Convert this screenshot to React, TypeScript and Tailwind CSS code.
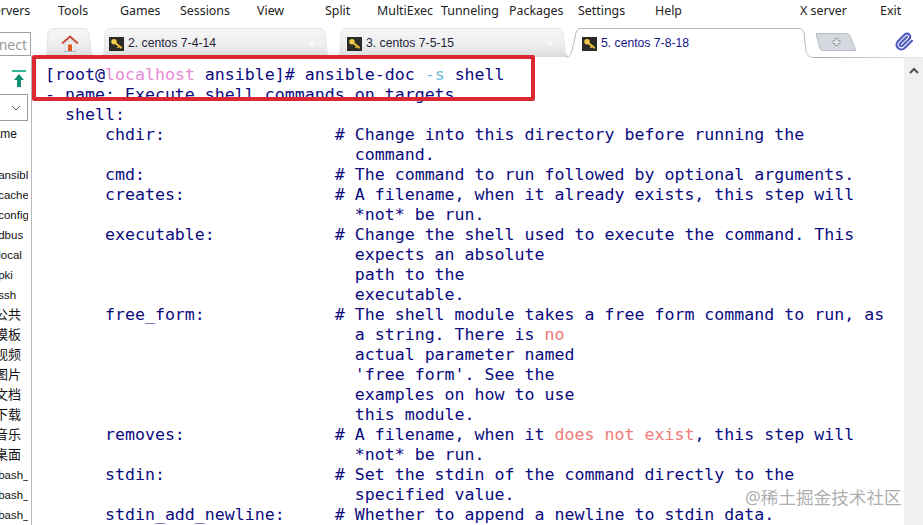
const menu: [string, string][] = [
  ["Servers", "w-[71px]"],
  ["Tools", "w-[62px]"],
  ["Games", "w-[60px]"],
  ["Sessions", "w-[77px]"],
  ["View", "w-[68px]"],
  ["Split", "w-[52px]"],
  ["MultiExec", "w-[64px]"],
  ["Tunneling", "w-[68px]"],
  ["Packages", "w-[69px]"],
  ["Settings", "w-[77px]"],
  ["Help", "w-[145px]"],
  ["X server", "w-[80px]"],
  ["Exit", "w-[30px]"],
];

type Seg = string | { t: string; c: string };
const N = "text-[#0b0b7e]";
const lines: Seg[][] = [
  ["[root@", { t: "localhost", c: "text-[#e88ad6]" }, " ansible]# ansible-doc ", { t: "-s", c: "text-[#6cc0dc]" }, " shell"],
  ["- name: Execute shell commands on targets"],
  ["  shell:"],
  ["      chdir:                 # Change into this directory before running the"],
  ["                               command."],
  ["      cmd:                   # The command to run followed by optional arguments."],
  ["      creates:               # A filename, when it already exists, this step will"],
  ["                               *not* be run."],
  ["      executable:            # Change the shell used to execute the command. This"],
  ["                               expects an absolute"],
  ["                               path to the"],
  ["                               executable."],
  ["      free_form:             # The shell module takes a free form command to run, as"],
  ["                               a string. There is ", { t: "no", c: "text-[#f07a78]" }],
  ["                               actual parameter named"],
  ["                               'free form'. See the"],
  ["                               examples on how to use"],
  ["                               this module."],
  ["      removes:               # A filename, when it ", { t: "does not exist", c: "text-[#f07a78]" }, ", this step will"],
  ["                               *not* be run."],
  ["      stdin:                 # Set the stdin of the command directly to the"],
  ["                               specified value."],
  ["      stdin_add_newline:     # Whether to append a newline to stdin data."],
];

const files: [string, boolean][] = [
  [".ansible", false],
  [".cache", false],
  [".config", false],
  [".dbus", false],
  [".local", false],
  [".pki", false],
  [".ssh", false],
  ["公共", true],
  ["模板", true],
  ["视频", true],
  ["图片", true],
  ["文档", true],
  ["下载", true],
  ["音乐", true],
  ["桌面", true],
  [".bash_history", false],
  [".bash_logout", false],
  [".bash_profile", false],
];

function KeyIcon() {
  return (
    <svg width="15" height="14" viewBox="0 0 15 14" className="shrink-0">
      <rect width="15" height="14" fill="#2b2b28" />
      <path d="M5 5 L12 10.500" stroke="#eabd3c" strokeWidth="2.200" strokeLinecap="round" />
      <circle cx="5" cy="4.800" r="2.700" fill="#f3cb4a" />
      <path d="M10 9 L8.500 11" stroke="#eabd3c" strokeWidth="1.400" />
    </svg>
  );
}

function TabShape({ width, active, id }: { width: number; active?: boolean; id: string }) {
  const h = 29;
  const d = `M0.5 ${h} C4 ${h} 6 ${h - 2} 7 ${h - 6} L${active ? 11 : 8} 5 C${active ? 12 : 9} 1.500 ${active ? 13 : 11} 0.500 ${active ? 16 : 14} 0.500 L${width - 14} 0.500 C${width - 11} 0.500 ${width - 9} 1.500 ${width - 8} 5 L${width - 6} ${h - 6} C${width - 5} ${h - 2} ${width - 3} ${h} ${width - 0.5} ${h}`;
  return (
    <svg width={width} height={h + 1} className="absolute left-0 top-[2px]">
      <defs>
        <linearGradient id={id} x1="0" y1="0" x2="0" y2="1">
          <stop offset="0" stopColor="#f6f6f6" />
          <stop offset="0.55" stopColor="#efefef" />
          <stop offset="1" stopColor="#dcdcdc" />
        </linearGradient>
      </defs>
      <path d={d} fill={active ? "#ffffff" : `url(#${id})`} stroke={active ? "#b4bcc0" : "#e4e4e4"} strokeWidth="1" />
    </svg>
  );
}

function Tab({ label, width, active, cls, pad, id }: { label: string; width: number; active?: boolean; cls: string; pad: string; id: string }) {
  return (
    <div className={`relative h-[30px] shrink-0 ${cls}`} style={{ width }}>
      <TabShape width={width} active={active} id={id} />
      <div className={`relative flex h-full items-center gap-[4px] pt-[5px] font-['Liberation_Sans',sans-serif] text-[12.2px] ${pad} ${active ? "text-[#14148a]" : "text-[#23233c]"}`}>
        <KeyIcon />
        <span>{label}</span>
      </div>
      {!active && <span className="absolute right-[18px] top-[9px] font-['Liberation_Sans',sans-serif] text-[11px] text-white">×</span>}
    </div>
  );
}

export default function App() {
  return (
    <div className="relative h-[525px] w-[923px] overflow-hidden bg-white font-['Noto_Sans',sans-serif] text-black">
      {/* menu */}
      <div className="-ml-[13px] flex h-[26px] items-start whitespace-nowrap pt-[1px] text-[12.4px] leading-[19px] text-[#222]">
        {menu.map(([m, w]) => (
          <span key={m} className={`shrink-0 ${w}`}>
            {m}
          </span>
        ))}
      </div>

      {/* tabs row */}
      <div className="flex h-[30px] items-start">
        <div className="mt-[6px] flex h-[24px] w-[31px] shrink-0 items-center justify-end overflow-hidden border border-l-0 border-[#a0a0a0] pr-[3px] text-[14px] text-[#9a9a9a]">
          <span>Connect</span>
        </div>
        <div className="relative ml-[9px] h-[30px] w-[57px] shrink-0">
          <TabShape width={57} id="home" />
          <svg width="18" height="17" viewBox="0 0 18 17" className="absolute left-[21px] top-[9px]">
            <path d="M1 8.500 L9 1.500 L17 8.500" fill="none" stroke="#c9483a" strokeWidth="1.800" />
            <path d="M4 8 L9 4 L14 8 V16 H4 Z" fill="#ececec" stroke="#c4c4c4" strokeWidth="0.500" />
            <rect x="7" y="9.500" width="4" height="6.500" fill="#e2571e" />
            <path d="M3 16.500 H15" stroke="#a8c0d0" strokeWidth="1" />
          </svg>
        </div>
        <Tab label="2. centos 7-4-14" width={236} cls="" pad="pl-[12px]" id="t2" />
        <Tab label="3. centos 7-5-15" width={238} cls="" pad="pl-[14px]" id="t3" />
        <Tab label="5. centos 7-8-18" width={247} cls="-ml-[6px] z-10" pad="pl-[17px]" active id="t5" />
        <svg width="42" height="18" viewBox="0 0 42 18" className="ml-[3px] mt-[7px] shrink-0">
          <path d="M1 0.500 H32 Q34 0.500 35 3 L41 17.500 H8 Q5.500 17.500 4.500 15 Z" fill="#d3d9de" stroke="#b8bfc4" />
          <path d="M20 5.500 H23 V7.500 H25 V10.500 H23 V12.500 H20 V10.500 H18 V7.500 H20 Z" fill="#e8ebee" stroke="#9aa3a8" />
        </svg>
        <svg width="19" height="19" viewBox="0 0 24 24" className="ml-[38px] mt-[6px] shrink-0" fill="none" stroke="#4f5cc0" strokeWidth="2.800" strokeLinecap="round" strokeLinejoin="round">
          <path d="m21.440 11.050-9.190 9.190a6 6 0 0 1-8.490-8.490l8.570-8.570A4 4 0 1 1 18 8.840l-8.590 8.570a2 2 0 0 1-2.830-2.830l8.490-8.480" />
        </svg>
      </div>

      {/* body */}
      <div className="flex h-[469px]">
        {/* sidebar */}
        <div className="flex w-[32px] shrink-0 flex-col border-r border-[#b8b8b8]">
          <svg width="16" height="18" viewBox="0 0 16 18" className="ml-[11px] mt-[14px] shrink-0">
            <rect x="1" y="0" width="14" height="2" fill="#35b89a" />
            <path d="M8 4 L13 10 H10 V17 H6 V10 H3 Z" fill="#0e8f74" />
          </svg>
          <div className="mt-[6px] flex h-[27px] w-[28px] shrink-0 items-center justify-end border border-l-0 border-[#9a9a9a] pr-[6px]">
            <svg width="10" height="6" viewBox="0 0 10 6" fill="none" stroke="#555" strokeWidth="1">
              <path d="M1 1 L5 5 L9 1" />
            </svg>
          </div>
          <div className="mt-[3px] h-[20px] w-[31px] overflow-hidden font-['Liberation_Sans',sans-serif] text-[12px] leading-[20px] text-[#111]">
            <div className="-ml-[15px]">Name</div>
          </div>
          <div className="mt-[21px] w-[28px] overflow-hidden font-['Liberation_Sans','Noto_Sans_CJK_SC',sans-serif] text-[11.5px] leading-[20px] text-[#111]">
            {files.map(([f, cjk]) => (
              <div key={f} className={`-ml-[5px] h-[20px] whitespace-nowrap ${cjk ? "text-[13px]" : ""}`}>
                {f}
              </div>
            ))}
          </div>
        </div>

        {/* terminal */}
        <div className="min-w-0 flex-1 overflow-hidden pl-[13px] pt-[9px] font-['DejaVu_Sans_Mono',monospace] text-[16.6px] leading-[20px] text-[#0b0b7e]">
          {lines.map((l, i) => (
            <div key={i} className="h-[20px] whitespace-pre">
              {l.map((s, j) =>
                typeof s === "string" ? (
                  <span key={j} className={N}>{s}</span>
                ) : (
                  <span key={j} className={s.c}>{s.t}</span>
                ),
              )}
            </div>
          ))}
        </div>

        {/* scrollbar */}
        <div className="mt-[2px] flex w-[19px] shrink-0 justify-center bg-[#f0f0f0] pt-[9px]">
          <svg width="10" height="7" viewBox="0 0 10 7" fill="none" stroke="#505050" strokeWidth="2">
            <path d="M1 6 L5 2 L9 6" />
          </svg>
        </div>
      </div>

      {/* tab strip rule */}
      <div className="absolute left-[812px] top-[57px] h-px w-[111px] bg-gradient-to-r from-[#a8a8a8] to-[#e8e8e8]" />

      {/* annotation overlay */}
      <div className="absolute left-[32px] top-[55px] h-[46px] w-[503px] rounded-[2px] border-[4px] border-[#dc2832]" />

      {/* watermark */}
      <div className="absolute left-[745px] top-[485px] whitespace-nowrap font-['Noto_Sans','Noto_Sans_CJK_SC',sans-serif] text-[17.6px] leading-[24px] text-[#8a8a8a]/70">
        @稀土掘金技术社区
      </div>
    </div>
  );
}
